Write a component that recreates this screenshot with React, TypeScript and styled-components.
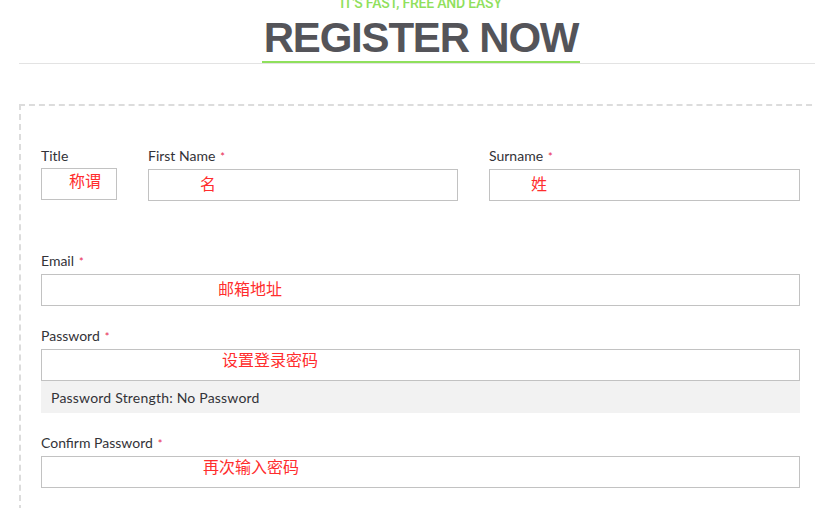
import * as React from 'react';
import styled, { createGlobalStyle } from 'styled-components';

const colors = {
  green: '#8fe05c',
  heading: '#545459',
  text: '#333338',
  border: '#c2c2c2',
  dash: '#dcdcdc',
  note: '#ff2d2d',
  required: '#e8254f',
  strength: '#f2f2f2'
};

const GlobalStyle = createGlobalStyle`
  body {
    margin: 0;
    background: #ffffff;
    font-family: Lato, "Noto Sans", Arial, sans-serif;
    overflow: hidden;
  }
`;

const Page = styled.div`
  padding-left: 19px;
  width: 816px;
  box-sizing: border-box;
`;

const Header = styled.header`
  margin-right: 1px;
  padding-left: 8px;
  text-align: center;
  border-bottom: 1px solid #e3e3e3;
`;

const Tagline = styled.div`
  margin-top: -4px;
  height: 14px;
  line-height: 14px;
  font-family: Roboto, "Liberation Sans", sans-serif;
  font-size: 14px;
  font-weight: 500;
  color: ${colors.green};
  letter-spacing: -0.2px;
`;

const TitleWrap = styled.div`
  display: inline-block;
  margin-top: 6px;
  padding: 0 2px 1px;
  border-bottom: 2px solid ${colors.green};
`;

const Title = styled.h1`
  margin: 0;
  font-family: "Liberation Sans", Arial, sans-serif;
  font-size: 42px;
  line-height: 44px;
  font-weight: 700;
  letter-spacing: -1.2px;
  color: ${colors.heading};
`;

const FormBox = styled.form`
  margin-top: 40px;
  margin-right: -6px;
  padding: 41px 20px 40px;
  border: 2px dashed ${colors.dash};
`;

const NameRow = styled.div`
  display: grid;
  grid-template-columns: 76px 310px 1fr;
  column-gap: 31px;
  margin-bottom: 51px;
`;

const Group = styled.div`
  margin-bottom: 21px;
`;

const Label = styled.label`
  display: block;
  margin-bottom: 4px;
  font-size: 14px;
  line-height: 17px;
  color: ${colors.text};
`;

const Required = styled.span`
  margin-left: 5px;
  font-size: 11px;
  color: ${colors.required};
`;

const Field = styled.div`
  position: relative;
`;

const Input = styled.input`
  display: block;
  width: 100%;
  height: 32px;
  box-sizing: border-box;
  margin: 0;
  padding: 0 10px;
  border: 1px solid ${colors.border};
  border-radius: 0;
  background: #fff;
  font: inherit;
  outline: none;
`;

const Note = styled.span<{ $left: number; $top: number }>`
  position: absolute;
  left: ${p => p.$left}px;
  top: ${p => p.$top}px;
  font-family: "Noto Sans CJK SC", sans-serif;
  font-size: 16px;
  line-height: 16px;
  color: ${colors.note};
  pointer-events: none;
  white-space: nowrap;
`;

const Strength = styled.div`
  display: flex;
  align-items: center;
  height: 32px;
  padding: 0 10px;
  background: ${colors.strength};
  font-size: 14px;
  letter-spacing: 0.2px;
  color: ${colors.text};
`;

interface FieldProps {
  label: string;
  required?: boolean;
  note: string;
  noteLeft: number;
  noteTop: number;
  type?: string;
}

const TextField = ({ label, required, note, noteLeft, noteTop, type = 'text' }: FieldProps) => (
  <div>
    <Label>
      {label}
      {required && <Required>*</Required>}
    </Label>
    <Field>
      <Input type={type} />
      <Note $left={noteLeft} $top={noteTop}>{note}</Note>
    </Field>
  </div>
);

export default function App() {
  return (
    <Page>
      <GlobalStyle />
      <Header>
        <Tagline>IT'S FAST, FREE AND EASY</Tagline>
        <TitleWrap>
          <Title>REGISTER NOW</Title>
        </TitleWrap>
      </Header>
      <FormBox onSubmit={e => e.preventDefault()}>
        <NameRow>
          <TextField label="Title" note="称谓" noteLeft={28} noteTop={4} />
          <TextField label="First Name" required note="名" noteLeft={52} noteTop={6} />
          <TextField label="Surname" required note="姓" noteLeft={42} noteTop={6} />
        </NameRow>
        <Group>
          <TextField label="Email" required note="邮箱地址" noteLeft={177} noteTop={6} type="email" />
        </Group>
        <Group>
          <TextField label="Password" required note="设置登录密码" noteLeft={181} noteTop={2} type="password" />
          <Strength>Password Strength: No Password</Strength>
        </Group>
        <Group>
          <TextField label="Confirm Password" required note="再次输入密码" noteLeft={162} noteTop={2} type="password" />
        </Group>
      </FormBox>
    </Page>
  );
}
